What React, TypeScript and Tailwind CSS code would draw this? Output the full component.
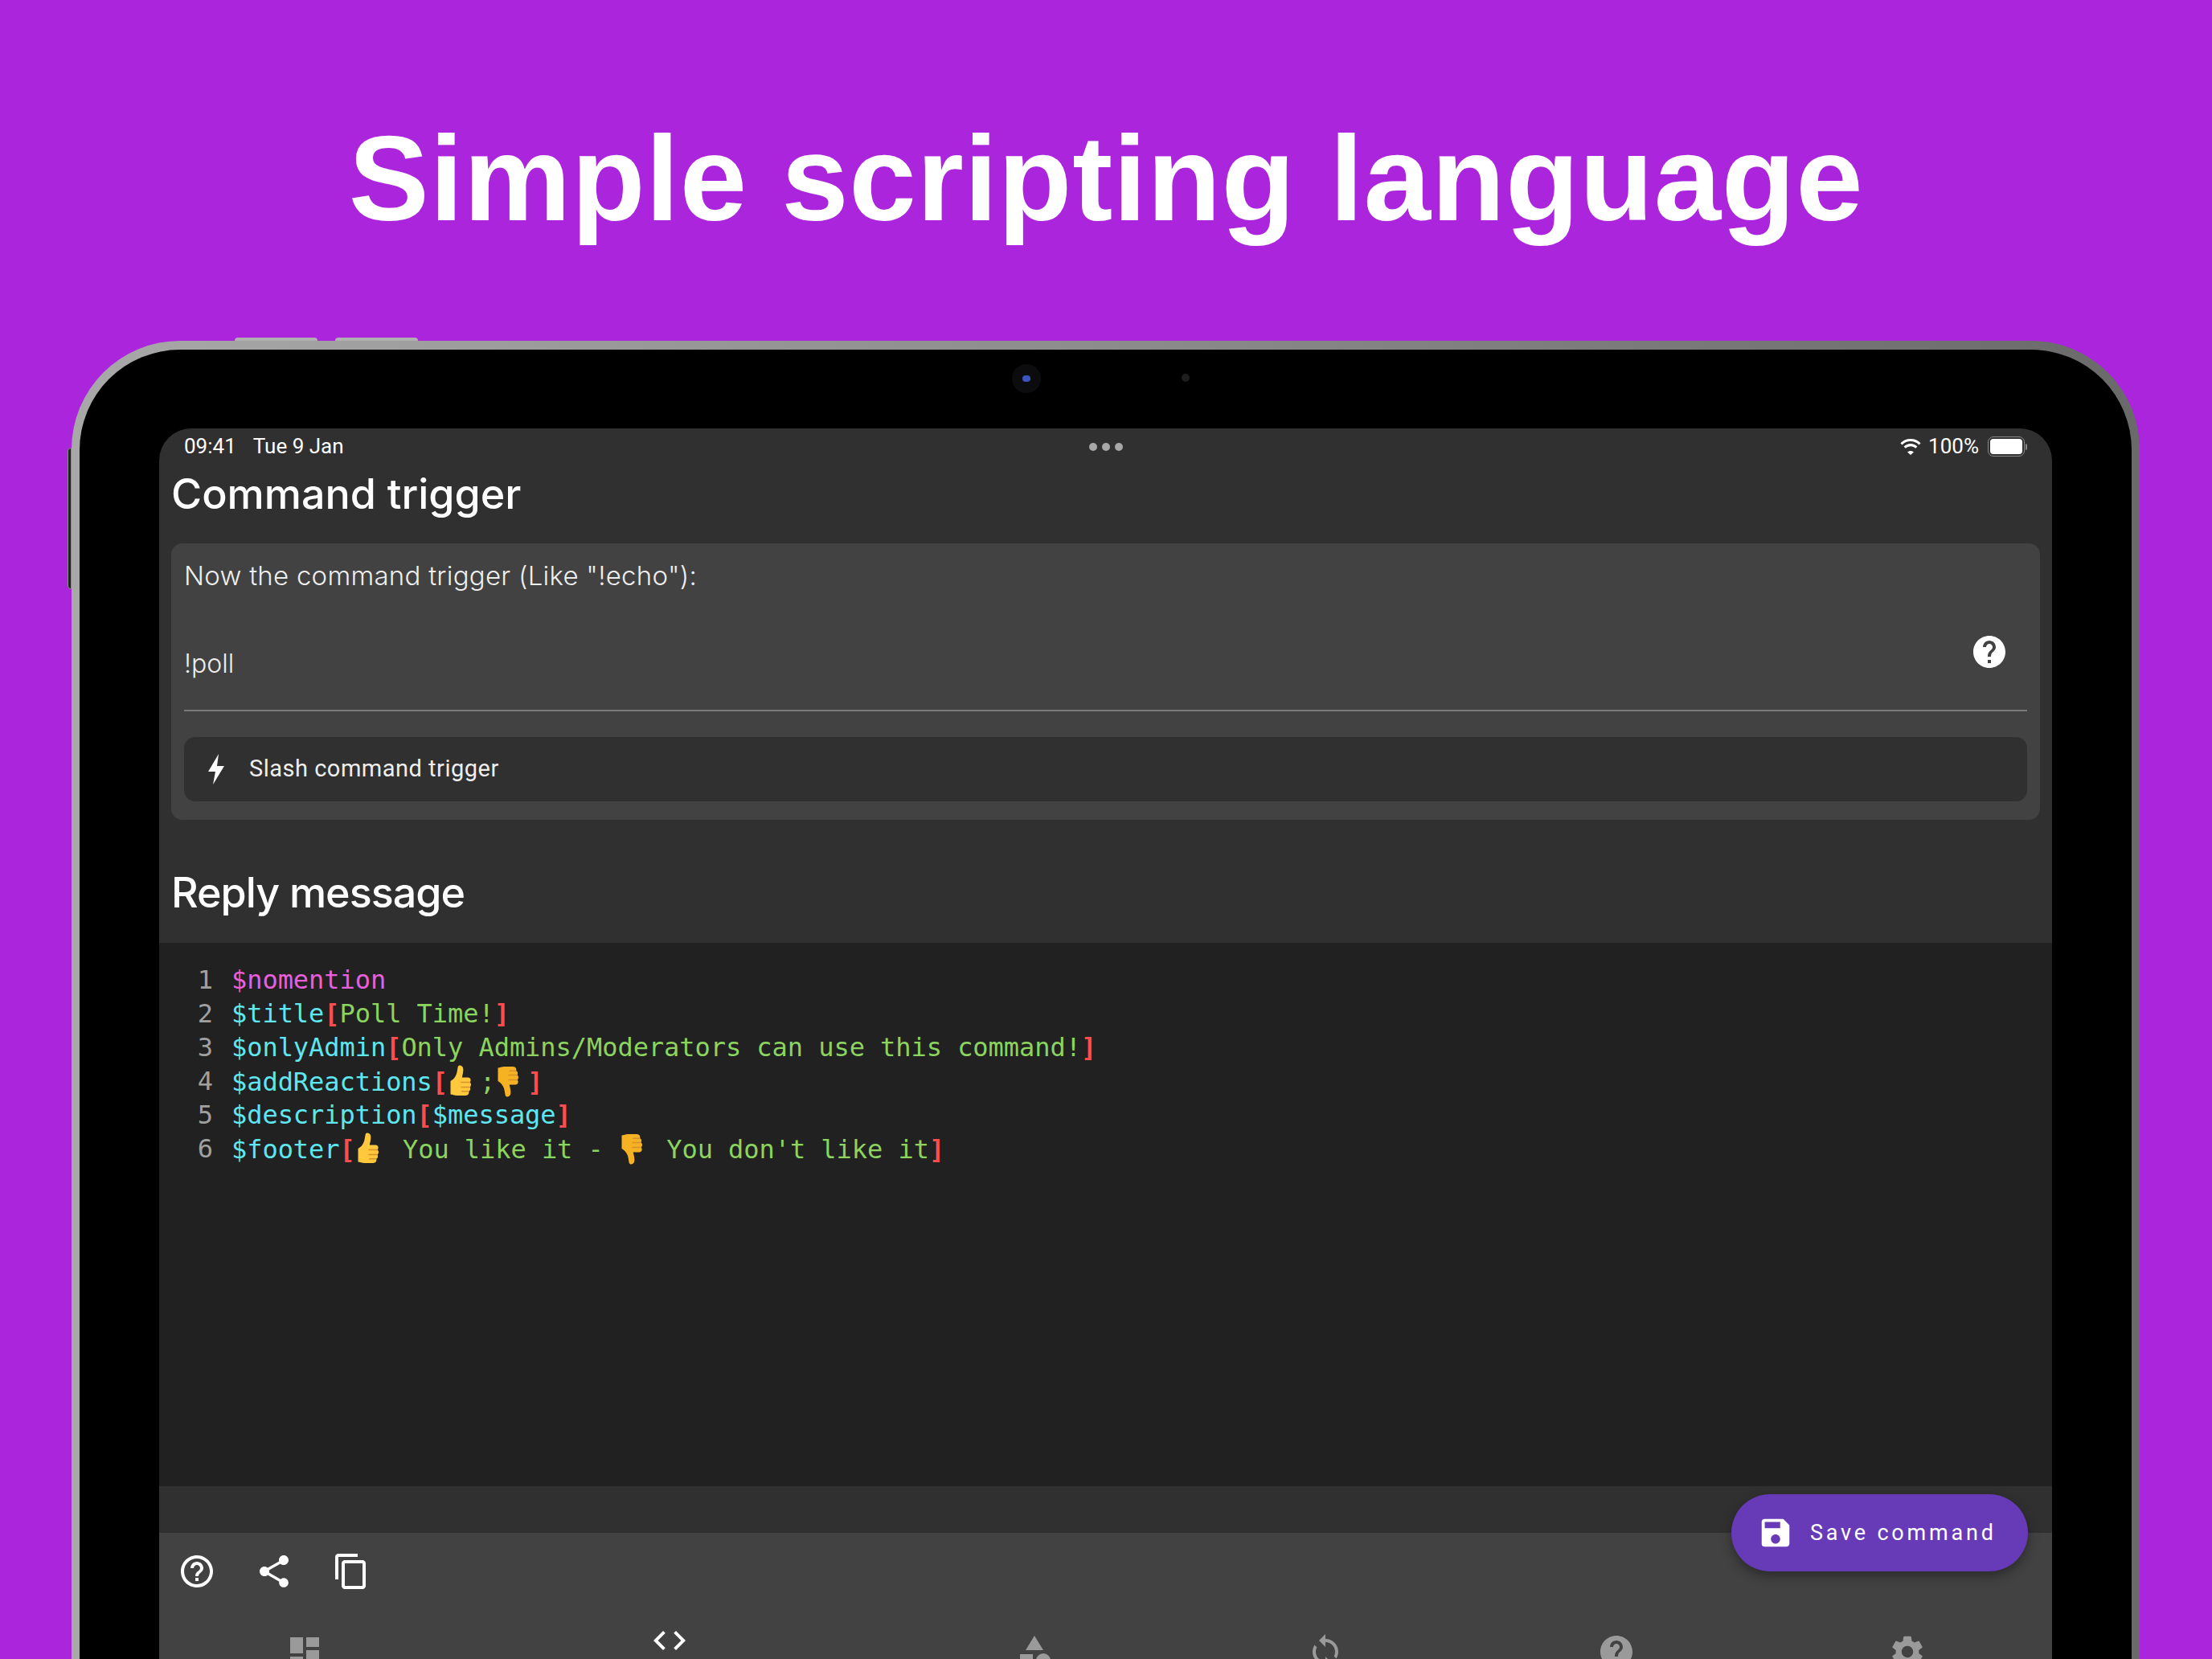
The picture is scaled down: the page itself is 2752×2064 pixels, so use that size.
import { FC, ReactNode } from "react";

const Thumb: FC<{ down?: boolean }> = ({ down }) => (
  <svg
    viewBox="0 0 24 28"
    className={`inline-block h-[42px] w-[40px] -translate-x-[6px] align-[-9px] ${down ? "-scale-y-100" : ""}`}
  >
    <path
      d="M5 14c2-1 4-3 5-6 .6-2 .7-4 1.200-6 .3-1.500 3.800-1.500 4.300 1.500.4 2.500-.5 5-1 7.500h5c2.500 0 2.800 3 1.500 4 1.500 1 1.200 3.200 0 4 .8 1.200.5 3-.8 3.500.4 1.500-.5 3.500-2.700 3.500h-7C8 26 6.500 25 5 25V14z"
      fill={down ? "#F5B324" : "#FFC83D"}
    />
    <path
      d="M14 15h7M14 19h6.500M14.500 22.500h5"
      stroke="#D9902A"
      strokeWidth="1"
      fill="none"
      strokeLinecap="round"
    />
  </svg>
);

type Token = { text?: string; color?: string; emoji?: "up" | "down" };

const CYAN = "text-[#5fe6ee]";
const GREEN = "text-[#8bd45f]";
const RED = "text-[#ff4d4f] font-bold";

const CODE_LINES: Token[][] = [
  [{ text: "$nomention", color: "text-[#e85fdc]" }],
  [
    { text: "$title", color: CYAN },
    { text: "[", color: RED },
    { text: "Poll Time!", color: GREEN },
    { text: "]", color: RED },
  ],
  [
    { text: "$onlyAdmin", color: CYAN },
    { text: "[", color: RED },
    { text: "Only Admins/Moderators can use this command!", color: GREEN },
    { text: "]", color: RED },
  ],
  [
    { text: "$addReactions", color: CYAN },
    { text: "[", color: RED },
    { emoji: "up" },
    { text: ";", color: GREEN },
    { emoji: "down" },
    { text: "]", color: RED },
  ],
  [
    { text: "$description", color: CYAN },
    { text: "[", color: RED },
    { text: "$message", color: CYAN },
    { text: "]", color: RED },
  ],
  [
    { text: "$footer", color: CYAN },
    { text: "[", color: RED },
    { emoji: "up" },
    { text: " You like it - ", color: GREEN },
    { emoji: "down" },
    { text: " You don't like it", color: GREEN },
    { text: "]", color: RED },
  ],
];

const MaterialIcon: FC<{ d: string; className?: string }> = ({ d, className }) => (
  <svg viewBox="0 0 24 24" fill="currentColor" className={className}>
    <path d={d} />
  </svg>
);

const HELP_FILLED =
  "M12 2C6.480 2 2 6.480 2 12s4.480 10 10 10 10-4.480 10-10S17.520 2 12 2zm1 17h-2v-2h2v2zm2.070-7.750-.9.920C13.450 12.900 13 13.500 13 15h-2v-.5c0-1.100.45-2.100 1.170-2.830l1.240-1.260c.37-.36.590-.86.590-1.410 0-1.100-.9-2-2-2s-2 .9-2 2H8c0-2.210 1.790-4 4-4s4 1.790 4 4c0 .88-.36 1.680-.93 2.250z";

const NAV_ICONS = [
  { d: "M3 13h8V3H3v10zm0 8h8v-6H3v6zm10 0h8V11h-8v10zm0-18v6h8V3h-8z", active: false },
  { d: "M9.400 16.600 4.800 12l4.600-4.600L8 6l-6 6 6 6 1.400-1.400zm5.200 0 4.600-4.600-4.600-4.600L16 6l6 6-6 6-1.400-1.400z", active: true },
  { d: "M12 2l-5.500 9h11L12 2zm5.500 11a4.500 4.500 0 1 0 0 9 4.500 4.500 0 0 0 0-9zM3 21.500h8v-8H3v8z", active: false },
  { d: "M12 4V1L8 5l4 4V6c3.310 0 6 2.690 6 6 0 1.010-.25 1.970-.7 2.800l1.460 1.460C19.540 15.030 20 13.570 20 12c0-4.420-3.580-8-8-8zm0 14c-3.310 0-6-2.690-6-6 0-1.010.25-1.970.7-2.800L5.240 7.740C4.460 8.970 4 10.430 4 12c0 4.420 3.580 8 8 8v3l4-4-4-4v3z", active: false },
  { d: HELP_FILLED, active: false },
  { d: "M19.140 12.940c.04-.3.060-.61.060-.94 0-.32-.02-.64-.07-.94l2.030-1.580a.49.49 0 0 0 .12-.61l-1.920-3.320a.488.488 0 0 0-.59-.22l-2.390.96c-.5-.38-1.030-.7-1.620-.94l-.36-2.540a.484.484 0 0 0-.48-.41h-3.840c-.24 0-.43.17-.47.41l-.36 2.540c-.59.24-1.130.57-1.620.94l-2.390-.96c-.22-.08-.47 0-.59.22L2.740 8.870c-.12.21-.08.47.12.61l2.030 1.580c-.05.3-.09.63-.09.94s.02.64.07.94l-2.030 1.580a.49.49 0 0 0-.12.61l1.920 3.320c.12.22.37.29.59.22l2.390-.96c.5.38 1.030.7 1.620.94l.36 2.540c.05.24.24.41.48.41h3.840c.24 0 .44-.17.47-.41l.36-2.540c.59-.24 1.130-.56 1.620-.94l2.390.96c.22.08.47 0 .59-.22l1.920-3.320c.12-.22.07-.47-.12-.61l-2.010-1.580zM12 15.600A3.610 3.610 0 0 1 8.400 12c0-1.980 1.620-3.600 3.600-3.600s3.600 1.620 3.600 3.600-1.620 3.600-3.600 3.600z", active: false },
];

const Heading: FC<{ children: ReactNode; className?: string }> = ({ children, className }) => (
  <h2 className={`font-['Inter',sans-serif] font-medium text-[52px] leading-[60px] text-white ${className ?? ""}`}>
    {children}
  </h2>
);

const StatusBar: FC = () => (
  <div className="relative flex h-[44px] items-center justify-between pl-[31px] pr-[31px] pt-[1px] font-['Roboto',sans-serif] text-[26px] text-white">
    <div className="flex gap-[21px]">
      <span>09:41</span>
      <span>Tue 9 Jan</span>
    </div>
    <div className="absolute left-[1157px] top-[18px] flex gap-[6px]">
      <span className="h-[10px] w-[10px] rounded-full bg-[#a8a8a8]" />
      <span className="h-[10px] w-[10px] rounded-full bg-[#a8a8a8]" />
      <span className="h-[10px] w-[10px] rounded-full bg-[#a8a8a8]" />
    </div>
    <div className="flex items-center gap-[8px]">
      <svg viewBox="0 0 24 18" className="h-[21px] w-[28px]" fill="white">
        <path d="M12 3.500c3.500 0 6.700 1.400 9 3.700l1.800-1.900A15.300 15.300 0 0 0 12 .8 15.300 15.300 0 0 0 1.200 5.300L3 7.200a12.700 12.700 0 0 1 9-3.700zm0 5.200c2.100 0 4 .8 5.400 2.200l1.800-1.900A10.200 10.200 0 0 0 12 6a10.200 10.200 0 0 0-7.200 3l1.800 1.900A7.700 7.700 0 0 1 12 8.700zm0 5c-1.300 0-2.500.5-3.400 1.300L12 18l3.400-3c-.9-.8-2.100-1.300-3.400-1.300z" />
      </svg>
      <span>100%</span>
      <div className="ml-[3px] flex items-center">
        <div className="h-[25px] w-[46px] rounded-[7px] border border-[#8a8a8a] p-[2px]">
          <div className="h-full w-full rounded-[4px] bg-white" />
        </div>
        <div className="ml-[1px] h-[8px] w-[2px] rounded-r bg-[#8a8a8a]" />
      </div>
    </div>
  </div>
);

const App: FC = () => {
  return (
    <div className="h-[2064px] overflow-hidden bg-[#aa25dc] font-['Roboto',sans-serif]">
      <h1 className="pt-[138px] text-center font-['Liberation_Sans',sans-serif] text-[150px] font-bold leading-[168px] tracking-[0.700px] text-white">
        Simple scripting language
      </h1>
      <div className="relative ml-[89px] mt-[118px] w-[2573px]">
        {/* Volume and power buttons */}
        <div className="absolute left-[203px] top-[-4px] h-[4px] w-[103px] rounded-t-sm bg-[#b0b0b0]" />
        <div className="absolute left-[328px] top-[-4px] h-[4px] w-[103px] rounded-t-sm bg-[#b0b0b0]" />
        <div className="absolute left-[-5px] top-[133px] h-[176px] w-[5px] rounded-l-sm border border-[#8a8a8a] bg-[#222222]" />

        <div className="rounded-t-[135px] bg-gradient-to-r from-[#a8a8a8] via-[#8c8c8c] to-[#6a6a6a] px-[10px] pt-[11px]">
          <div className="relative rounded-t-[125px] bg-black px-[99px] pt-[98px]">
            {/* Camera */}
            <div className="absolute left-[1160px] top-[18px] flex h-[36px] w-[36px] items-center justify-center rounded-full bg-[#0c0c0e]">
              <div className="h-[8px] w-[10px] rounded-full bg-[#3a55c0]" />
            </div>
            <div className="absolute left-[1371px] top-[30px] h-[10px] w-[10px] rounded-full bg-[#1e1e1e]" />

            <div className="relative h-[1531px] overflow-hidden rounded-t-[40px] bg-[#303030]">
              <StatusBar />
              <Heading className="ml-[15px] mt-[8px]">Command trigger</Heading>

              <section className="mx-[15px] mt-[31px] h-[344px] rounded-[14px] bg-[#424242] px-[16px]">
                <p className="pt-[20px] font-['Inter',sans-serif] text-[33px] font-light leading-[40px] tracking-[0.250px] text-[#eeeeee]">
                  Now the command trigger (Like "!echo"):
                </p>
                <div className="relative mt-[70px] h-[79px] border-b-2 border-[#7a7a7a]">
                  <span className="font-['Inter',sans-serif] text-[32px] font-light leading-[40px] text-[#eeeeee]">!poll</span>
                  <MaterialIcon
                    className="absolute right-[23px] top-[-19px] h-[48px] w-[48px] text-white"
                    d={HELP_FILLED}
                  />
                </div>
                <div className="mt-[32px] flex h-[80px] items-center rounded-[14px] bg-[#303030] pl-[28px]">
                  <svg viewBox="0 0 24 38" fill="white" className="h-[38px] w-[24px]">
                    <path d="M15 0 2 22h9L8 38l14-23h-9z" />
                  </svg>
                  <span className="ml-[29px] font-['Roboto',sans-serif] text-[29px] tracking-[0.500px] text-[#eeeeee]">
                    Slash command trigger
                  </span>
                </div>
              </section>

              <Heading className="ml-[15px] mt-[61px] tracking-[-1px]">Reply message</Heading>

              <div className="mt-[32px] h-[676px] bg-[#212121] pt-[25px] font-['DejaVu_Sans_Mono',monospace] text-[32px] leading-[42px] tracking-[-0.050px]">
                {CODE_LINES.map((tokens, index) => (
                  <div key={`code-line-${index}`} className="flex h-[42px] whitespace-pre">
                    <span className="w-[70px] pr-[3px] text-right text-[#a0a0a0]">{index + 1}</span>
                    <span className="ml-[20px]">
                      {tokens.map((token, tokenIndex) =>
                        token.emoji ? (
                          <Thumb key={tokenIndex} down={token.emoji === "down"} />
                        ) : (
                          <span key={tokenIndex} className={token.color}>
                            {token.text}
                          </span>
                        ),
                      )}
                    </span>
                  </div>
                ))}
              </div>

              <div className="h-[58px] bg-[#303030]" />

              <div className="h-[220px] bg-[#424242]">
                <div className="flex items-center gap-[48px] pl-[23px] pt-[24px] text-white">
                  <MaterialIcon
                    className="h-[48px] w-[48px]"
                    d="M11 18h2v-2h-2v2zm1-16C6.480 2 2 6.480 2 12s4.480 10 10 10 10-4.480 10-10S17.520 2 12 2zm0 18c-4.410 0-8-3.590-8-8s3.590-8 8-8 8 3.590 8 8-3.590 8-8 8zm0-14c-2.210 0-4 1.790-4 4h2c0-1.100.9-2 2-2s2 .9 2 2c0 2-3 1.750-3 5h2c0-2.250 3-2.500 3-5 0-2.210-1.790-4-4-4z"
                  />
                  <MaterialIcon
                    className="h-[48px] w-[48px]"
                    d="M18 16.080c-.76 0-1.440.3-1.960.77L8.910 12.700c.05-.23.090-.46.090-.7s-.04-.47-.09-.7l7.050-4.110c.54.5 1.250.81 2.040.81 1.660 0 3-1.340 3-3s-1.340-3-3-3-3 1.340-3 3c0 .24.040.47.090.7L8.040 9.810C7.500 9.310 6.790 9 6 9c-1.660 0-3 1.340-3 3s1.340 3 3 3c.79 0 1.500-.31 2.040-.81l7.120 4.160c-.05.21-.08.43-.08.65 0 1.610 1.310 2.920 2.920 2.920s2.920-1.310 2.920-2.920-1.310-2.920-2.920-2.920z"
                  />
                  <MaterialIcon
                    className="h-[48px] w-[48px]"
                    d="M16 1H4c-1.100 0-2 .9-2 2v14h2V3h12V1zm3 4H8c-1.100 0-2 .9-2 2v14c0 1.100.9 2 2 2h11c1.100 0 2-.9 2-2V7c0-1.100-.9-2-2-2zm0 16H8V7h11v14z"
                  />
                </div>
                <div className="mt-[52px] grid grid-cols-[362px_546px_362px_362px_362px_362px]">
                  {NAV_ICONS.map((icon, index) => (
                    <div key={`nav-icon-${index}`} className={`flex justify-center ${icon.active ? "-mt-[14px]" : ""}`}>
                      <MaterialIcon
                        className={`h-[48px] w-[48px] ${icon.active ? "text-white" : "text-[#9a9a9a]"}`}
                        d={icon.d}
                      />
                    </div>
                  ))}
                </div>
              </div>

              <button className="absolute left-[1956px] top-[1326px] flex h-[96px] w-[369px] items-center rounded-full bg-[#673ab7] pl-[32px] text-white shadow-[0_6px_14px_rgba(0,0,0,0.35)]">
                <MaterialIcon
                  className="h-[46px] w-[46px]"
                  d="M17 3H5a2 2 0 0 0-2 2v14a2 2 0 0 0 2 2h14c1.100 0 2-.9 2-2V7l-4-4zm-5 16c-1.660 0-3-1.340-3-3s1.340-3 3-3 3 1.340 3 3-1.340 3-3 3zm3-10H5V5h10v4z"
                />
                <span className="ml-[20px] font-['Roboto',sans-serif] text-[27px] tracking-[3.800px]">
                  Save command
                </span>
              </button>
            </div>
          </div>
        </div>
      </div>
    </div>
  );
};

export default App;
